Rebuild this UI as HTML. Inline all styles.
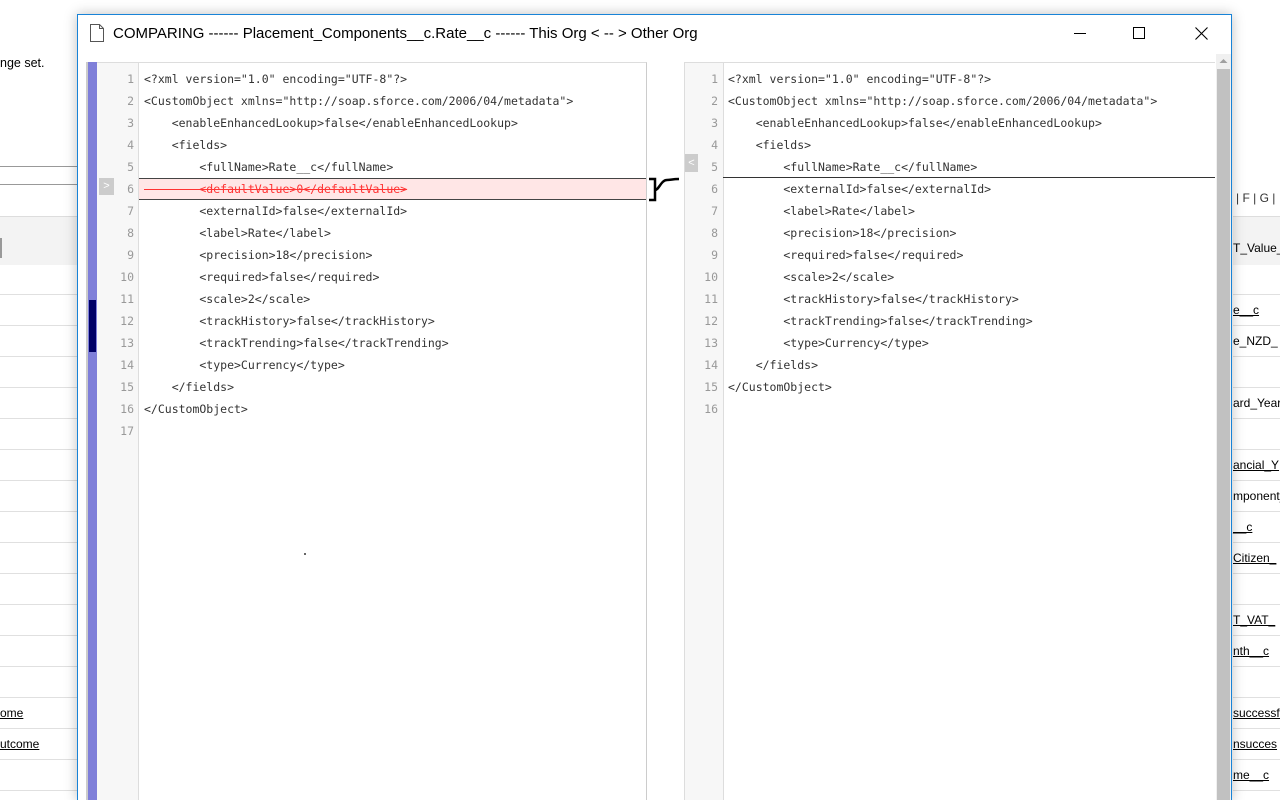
<!DOCTYPE html>
<html style="overflow:hidden;height:800px"><head><style>
html,body{overflow:hidden;height:800px}
body{margin:0;width:1280px;background:#fff;font-family:"Liberation Sans",Arial,sans-serif;position:relative}
.a{position:absolute}
.bgl{position:absolute;left:0;width:78px;height:1px;background:#e0e0e0}
.bgr{position:absolute;left:1233px;width:47px;height:1px;background:#e0e0e0}
.bt{position:absolute;font-size:12px;color:#000;text-decoration:underline}
.code{font-family:"DejaVu Sans Mono",monospace;font-size:11.5px;color:#333;white-space:pre}
.num{text-align:right;color:#999;width:36px;font-family:"DejaVu Sans Mono",monospace;font-size:11.5px}
</style></head><body>
<div class="a" style="left:0;top:56px;font-size:12.5px">nge set.</div>
<div class="a" style="left:0;top:166px;width:78px;height:1px;background:#999"></div>
<div class="a" style="left:0;top:184px;width:78px;height:1px;background:#999"></div>
<div class="a" style="left:0;top:216px;width:78px;height:48px;background:#f3f3f3;border-top:1px solid #ddd"></div>
<div class="a" style="left:0;top:238px;width:2px;height:20px;background:#999"></div>
<div class="a" style="left:1233px;top:216px;width:47px;height:48px;background:#f3f3f3;border-top:1px solid #ddd"></div>
<div class="a" style="left:1236px;top:191px;font-size:12px;color:#333">| F | G |</div>
<div class="bgl" style="top:294px"></div><div class="bgl" style="top:325px"></div><div class="bgl" style="top:356px"></div><div class="bgl" style="top:387px"></div><div class="bgl" style="top:418px"></div><div class="bgl" style="top:449px"></div><div class="bgl" style="top:480px"></div><div class="bgl" style="top:511px"></div><div class="bgl" style="top:542px"></div><div class="bgl" style="top:573px"></div><div class="bgl" style="top:604px"></div><div class="bgl" style="top:635px"></div><div class="bgl" style="top:666px"></div><div class="bgl" style="top:697px"></div><div class="bgl" style="top:728px"></div><div class="bgl" style="top:759px"></div><div class="bgl" style="top:790px"></div>
<div class="bgr" style="top:294px"></div><div class="bgr" style="top:325px"></div><div class="bgr" style="top:356px"></div><div class="bgr" style="top:387px"></div><div class="bgr" style="top:418px"></div><div class="bgr" style="top:449px"></div><div class="bgr" style="top:480px"></div><div class="bgr" style="top:511px"></div><div class="bgr" style="top:542px"></div><div class="bgr" style="top:573px"></div><div class="bgr" style="top:604px"></div><div class="bgr" style="top:635px"></div><div class="bgr" style="top:666px"></div><div class="bgr" style="top:697px"></div><div class="bgr" style="top:728px"></div><div class="bgr" style="top:759px"></div><div class="bgr" style="top:790px"></div>
<div class="bt" style="left:0;top:706px">ome</div>
<div class="bt" style="left:0;top:737px">utcome</div>
<div class="bt" style="left:1233px;top:241px;text-decoration:none">T_Value_</div>
<div class="bt" style="left:1233px;top:303px">e__c</div>
<div class="bt" style="left:1233px;top:334px;text-decoration:none">e_NZD_</div>
<div class="bt" style="left:1233px;top:396px;text-decoration:none">ard_Year</div>
<div class="bt" style="left:1233px;top:458px">ancial_Y</div>
<div class="bt" style="left:1233px;top:489px;text-decoration:none">mponent_</div>
<div class="bt" style="left:1233px;top:520px">__c</div>
<div class="bt" style="left:1233px;top:551px">Citizen_</div>
<div class="bt" style="left:1233px;top:613px">T_VAT_</div>
<div class="bt" style="left:1233px;top:644px">nth__c</div>
<div class="bt" style="left:1233px;top:706px">successfu</div>
<div class="bt" style="left:1233px;top:737px">nsucces</div>
<div class="bt" style="left:1233px;top:768px">me__c</div>

<div class="a" style="left:77px;top:14px;width:1153px;height:786px;background:#fff;border:1px solid #1883d7;border-bottom:none;box-shadow:0 0 12px rgba(0,0,0,.25)"></div>
<svg class="a" style="left:89px;top:24px" width="16" height="18" viewBox="0 0 16 18"><path d="M1.5 0.5h9l4 4v13h-13z M10.5 0.5v4h4" fill="none" stroke="#555" stroke-width="1"/></svg>
<div class="a" style="left:113px;top:25px;font-size:15px;color:#000">COMPARING ------ Placement_Components__c.Rate__c ------ This Org &lt; -- &gt; Other Org</div>
<div class="a" style="left:1074px;top:33px;width:12px;height:1px;background:#000"></div>
<div class="a" style="left:1133px;top:27px;width:10px;height:10px;border:1px solid #000"></div>
<svg class="a" style="left:1195px;top:27px" width="13" height="13"><path d="M0.5 0.5L12.5 12.5M12.5 0.5L0.5 12.5" stroke="#000" stroke-width="1.1"/></svg>

<div class="a" style="left:86px;top:62px;width:2px;height:738px;background:#ccc"></div>
<div class="a" style="left:88px;top:62px;width:9px;height:738px;background:#7f7fd9"></div>
<div class="a" style="left:89px;top:300px;width:7px;height:52px;background:#000066"></div>
<div class="a" style="left:97px;top:62px;width:41px;height:738px;background:#f7f7f7;border-right:1px solid #ddd;border-top:1px solid #ddd"></div>
<div class="a" style="left:139px;top:62px;width:507px;height:738px;border-right:1px solid #ccc;border-top:1px solid #ddd"></div>
<div class="a" style="left:139px;top:178px;width:507px;height:20px;background:#ffe6e6;border-top:1px solid #444;border-bottom:1px solid #444"></div>
<div class="a" style="left:99px;top:178px;width:15px;height:17px;background:#ccc;color:#fff;font-size:11px;text-align:center;line-height:17px">&gt;</div>

<div class="a" style="left:98px;top:68px">
<div class="num" style="line-height:22px">1<br>2<br>3<br>4<br>5<br>6<br>7<br>8<br>9<br>10<br>11<br>12<br>13<br>14<br>15<br>16<br>17</div></div>
<div class="a code" style="left:144px;top:68px;line-height:22px">&lt;?xml version="1.0" encoding="UTF-8"?&gt;
&lt;CustomObject xmlns="http://soap.sforce.com/2006/04/metadata"&gt;
    &lt;enableEnhancedLookup&gt;false&lt;/enableEnhancedLookup&gt;
    &lt;fields&gt;
        &lt;fullName&gt;Rate__c&lt;/fullName&gt;
<span style="color:#f33;text-decoration:line-through">        &lt;defaultValue&gt;0&lt;/defaultValue&gt;</span>
        &lt;externalId&gt;false&lt;/externalId&gt;
        &lt;label&gt;Rate&lt;/label&gt;
        &lt;precision&gt;18&lt;/precision&gt;
        &lt;required&gt;false&lt;/required&gt;
        &lt;scale&gt;2&lt;/scale&gt;
        &lt;trackHistory&gt;false&lt;/trackHistory&gt;
        &lt;trackTrending&gt;false&lt;/trackTrending&gt;
        &lt;type&gt;Currency&lt;/type&gt;
    &lt;/fields&gt;
&lt;/CustomObject&gt;
</div>
<div class="a" style="left:304px;top:553px;width:2px;height:2px;background:#666"></div>

<svg class="a" style="left:646px;top:170px" width="40" height="34"><path d="M3 9h6v21h-6 M9 20c4 0 6-10 12-10 4 0 5-1 12-1" fill="none" stroke="#000" stroke-width="2.5"/></svg>

<div class="a" style="left:684px;top:62px;width:38px;height:738px;background:#f7f7f7;border-right:1px solid #ddd;border-top:1px solid #ddd;border-left:1px solid #ddd"></div>
<div class="a" style="left:723px;top:62px;width:492px;height:738px;border-top:1px solid #ddd"></div>
<div class="a" style="left:685px;top:154px;width:13px;height:18px;background:#ccc;color:#fff;font-size:11px;text-align:center;line-height:18px">&lt;</div>
<div class="a" style="left:723px;top:177px;width:492px;height:1px;background:#333"></div>
<div class="a" style="left:682px;top:68px">
<div class="num" style="line-height:22px">1<br>2<br>3<br>4<br>5<br>6<br>7<br>8<br>9<br>10<br>11<br>12<br>13<br>14<br>15<br>16</div></div>
<div class="a code" style="left:728px;top:68px;line-height:22px">&lt;?xml version="1.0" encoding="UTF-8"?&gt;
&lt;CustomObject xmlns="http://soap.sforce.com/2006/04/metadata"&gt;
    &lt;enableEnhancedLookup&gt;false&lt;/enableEnhancedLookup&gt;
    &lt;fields&gt;
        &lt;fullName&gt;Rate__c&lt;/fullName&gt;
        &lt;externalId&gt;false&lt;/externalId&gt;
        &lt;label&gt;Rate&lt;/label&gt;
        &lt;precision&gt;18&lt;/precision&gt;
        &lt;required&gt;false&lt;/required&gt;
        &lt;scale&gt;2&lt;/scale&gt;
        &lt;trackHistory&gt;false&lt;/trackHistory&gt;
        &lt;trackTrending&gt;false&lt;/trackTrending&gt;
        &lt;type&gt;Currency&lt;/type&gt;
    &lt;/fields&gt;
&lt;/CustomObject&gt;
</div>

<div class="a" style="left:1216px;top:54px;width:15px;height:746px;background:#f0f0f0"></div>
<div class="a" style="left:1217px;top:69px;width:13px;height:731px;background:#c1c1c1"></div>
<svg class="a" style="left:1218px;top:57px" width="11" height="8"><path d="M1.5 6L5.5 2L9.5 6z" fill="#a0a0a0"/></svg>
</body></html>
